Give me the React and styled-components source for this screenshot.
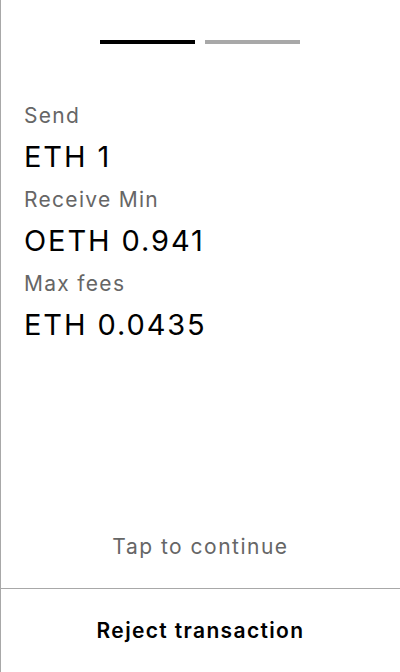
import React from 'react'
import styled, { createGlobalStyle } from 'styled-components'

const GlobalStyle = createGlobalStyle`
  html, body {
    margin: 0;
    padding: 0;
    background: #fff;
  }
  body {
    font-family: Inter, "Noto Sans", sans-serif;
  }
`

const rows = [
  { label: 'Send', value: 'ETH 1' },
  { label: 'Receive Min', value: 'OETH 0.941' },
  { label: 'Max fees', value: 'ETH 0.0435' },
]

function App() {
  return (
    <>
      <GlobalStyle />
      <Screen>
        <Main>
          <Steps>
            <Step active />
            <Step />
          </Steps>
          <Details>
            {rows.map((r) => (
              <Item key={r.label}>
                <Label>{r.label}</Label>
                <Value>{r.value}</Value>
              </Item>
            ))}
          </Details>
          <Hint>Tap to continue</Hint>
        </Main>
        <Reject>Reject transaction</Reject>
      </Screen>
    </>
  )
}

const Screen = styled.div`
  height: 100vh;
  box-sizing: border-box;
  border-left: 1px solid #a8a8a8;
  display: flex;
  flex-direction: column;
`
const Main = styled.div`
  flex: 1;
  display: flex;
  flex-direction: column;
  padding: 40px 0 29px;
`
const Steps = styled.div`
  display: flex;
  justify-content: center;
  gap: 10px;
  margin-left: -1px;
`
const Step = styled.div`
  width: 95px;
  height: 4px;
  background: ${(p) => (p.active ? '#000' : '#a8a8a8')};
`
const Details = styled.div`
  display: flex;
  flex-direction: column;
  gap: 14px;
  padding: 60px 23px 0;
`
const Item = styled.div`
  display: flex;
  flex-direction: column;
  gap: 12px;
`
const Label = styled.div`
  font-size: 21px;
  line-height: 24px;
  letter-spacing: 1.3px;
  color: #666;
`
const Value = styled.div`
  font-size: 29px;
  line-height: 34px;
  letter-spacing: 1.9px;
  color: #000;
`
const Hint = styled.div`
  margin-top: auto;
  text-align: center;
  font-size: 21px;
  line-height: 24px;
  letter-spacing: 1.5px;
  color: #666;
`
const Reject = styled.div`
  height: 83px;
  border-top: 1px solid #a8a8a8;
  display: flex;
  align-items: center;
  justify-content: center;
  font-size: 21px;
  font-weight: 600;
  letter-spacing: 1.35px;
  color: #000;
`

export default App
